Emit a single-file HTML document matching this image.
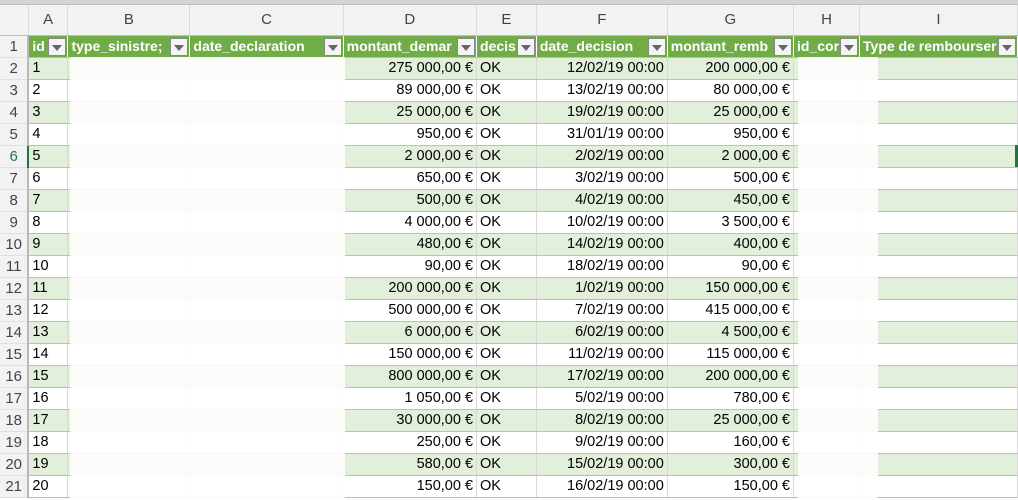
<!DOCTYPE html>
<html><head><meta charset="utf-8"><style>
*{margin:0;padding:0;box-sizing:border-box}
body{width:1018px;height:500px;overflow:hidden;background:#fff;font-family:"Liberation Sans",sans-serif;font-size:14.5px;position:relative}
.top{position:absolute;left:0;top:0;width:1018px;height:5px;background:#d4d4d4;border-bottom:1px solid #bdbdbd}
table{position:absolute;left:0;top:5px;border-collapse:collapse;table-layout:fixed}
td{height:22px;white-space:nowrap;overflow:hidden;padding:0 3px;border-right:1px solid #d9d9d9;border-bottom:1px solid #a9d08e;color:#000;line-height:21px}
tr.ch td{height:30px;background:#f2f2f2;color:#444;text-align:center;border-right:1px solid #dcdcdc;border-bottom:1px solid #bfbfbf;font-size:15px}
td.rh{background:#f2f2f2;color:#444;text-align:center;border-right:2px solid #b8b8b8;border-bottom:1px solid #e0e0e0;padding:0;font-size:15px}
tr.h td.c{background:#70ad47;color:#fff;font-weight:bold;position:relative;border-right:1px solid #fff;padding-right:20px;font-size:14px}
.dd{position:absolute;right:1px;top:2px;width:18px;height:18px;background:#f4f4f4;border:1px solid #888}
.dd:after{content:"";position:absolute;left:3px;top:6px;border-left:5px solid transparent;border-right:5px solid transparent;border-top:6px solid #666}
tr.g td.c{background:#e2efda}
td.r{text-align:right}
.ov{position:absolute;background:rgba(255,255,255,0.88)}
</style></head><body>
<div class="top"></div>
<table>
<colgroup><col style="width:30px"><col style="width:40px"><col style="width:123px"><col style="width:156px"><col style="width:134px"><col style="width:54px"><col style="width:133px"><col style="width:127px"><col style="width:63px"><col style="width:158px"></colgroup>
<tr class="ch"><td style="background:#f2f2f2"></td><td>A</td><td>B</td><td>C</td><td>D</td><td>E</td><td>F</td><td>G</td><td>H</td><td>I</td></tr>
<tr class="h"><td class="rh">1</td><td class="c">id<span class="dd"></span></td><td class="c">type_sinistre;<span class="dd"></span></td><td class="c">date_declaration<span class="dd"></span></td><td class="c">montant_demar<span class="dd"></span></td><td class="c">decis<span class="dd"></span></td><td class="c">date_decision<span class="dd"></span></td><td class="c">montant_remb<span class="dd"></span></td><td class="c">id_cor<span class="dd"></span></td><td class="c">Type de rembourser<span class="dd"></span></td></tr>
<tr class="g"><td class="rh">2</td><td class="c">1</td><td class="c"></td><td class="c"></td><td class="c r">275 000,00 €</td><td class="c">OK</td><td class="c r">12/02/19 00:00</td><td class="c r">200 000,00 €</td><td class="c"></td><td class="c"></td></tr>
<tr><td class="rh">3</td><td class="c">2</td><td class="c"></td><td class="c"></td><td class="c r">89 000,00 €</td><td class="c">OK</td><td class="c r">13/02/19 00:00</td><td class="c r">80 000,00 €</td><td class="c"></td><td class="c"></td></tr>
<tr class="g"><td class="rh">4</td><td class="c">3</td><td class="c"></td><td class="c"></td><td class="c r">25 000,00 €</td><td class="c">OK</td><td class="c r">19/02/19 00:00</td><td class="c r">25 000,00 €</td><td class="c"></td><td class="c"></td></tr>
<tr><td class="rh">5</td><td class="c">4</td><td class="c"></td><td class="c"></td><td class="c r">950,00 €</td><td class="c">OK</td><td class="c r">31/01/19 00:00</td><td class="c r">950,00 €</td><td class="c"></td><td class="c"></td></tr>
<tr class="g"><td class="rh" style="color:#217346;border-right-color:#217346">6</td><td class="c">5</td><td class="c"></td><td class="c"></td><td class="c r">2 000,00 €</td><td class="c">OK</td><td class="c r">2/02/19 00:00</td><td class="c r">2 000,00 €</td><td class="c"></td><td class="c"></td></tr>
<tr><td class="rh">7</td><td class="c">6</td><td class="c"></td><td class="c"></td><td class="c r">650,00 €</td><td class="c">OK</td><td class="c r">3/02/19 00:00</td><td class="c r">500,00 €</td><td class="c"></td><td class="c"></td></tr>
<tr class="g"><td class="rh">8</td><td class="c">7</td><td class="c"></td><td class="c"></td><td class="c r">500,00 €</td><td class="c">OK</td><td class="c r">4/02/19 00:00</td><td class="c r">450,00 €</td><td class="c"></td><td class="c"></td></tr>
<tr><td class="rh">9</td><td class="c">8</td><td class="c"></td><td class="c"></td><td class="c r">4 000,00 €</td><td class="c">OK</td><td class="c r">10/02/19 00:00</td><td class="c r">3 500,00 €</td><td class="c"></td><td class="c"></td></tr>
<tr class="g"><td class="rh">10</td><td class="c">9</td><td class="c"></td><td class="c"></td><td class="c r">480,00 €</td><td class="c">OK</td><td class="c r">14/02/19 00:00</td><td class="c r">400,00 €</td><td class="c"></td><td class="c"></td></tr>
<tr><td class="rh">11</td><td class="c">10</td><td class="c"></td><td class="c"></td><td class="c r">90,00 €</td><td class="c">OK</td><td class="c r">18/02/19 00:00</td><td class="c r">90,00 €</td><td class="c"></td><td class="c"></td></tr>
<tr class="g"><td class="rh">12</td><td class="c">11</td><td class="c"></td><td class="c"></td><td class="c r">200 000,00 €</td><td class="c">OK</td><td class="c r">1/02/19 00:00</td><td class="c r">150 000,00 €</td><td class="c"></td><td class="c"></td></tr>
<tr><td class="rh">13</td><td class="c">12</td><td class="c"></td><td class="c"></td><td class="c r">500 000,00 €</td><td class="c">OK</td><td class="c r">7/02/19 00:00</td><td class="c r">415 000,00 €</td><td class="c"></td><td class="c"></td></tr>
<tr class="g"><td class="rh">14</td><td class="c">13</td><td class="c"></td><td class="c"></td><td class="c r">6 000,00 €</td><td class="c">OK</td><td class="c r">6/02/19 00:00</td><td class="c r">4 500,00 €</td><td class="c"></td><td class="c"></td></tr>
<tr><td class="rh">15</td><td class="c">14</td><td class="c"></td><td class="c"></td><td class="c r">150 000,00 €</td><td class="c">OK</td><td class="c r">11/02/19 00:00</td><td class="c r">115 000,00 €</td><td class="c"></td><td class="c"></td></tr>
<tr class="g"><td class="rh">16</td><td class="c">15</td><td class="c"></td><td class="c"></td><td class="c r">800 000,00 €</td><td class="c">OK</td><td class="c r">17/02/19 00:00</td><td class="c r">200 000,00 €</td><td class="c"></td><td class="c"></td></tr>
<tr><td class="rh">17</td><td class="c">16</td><td class="c"></td><td class="c"></td><td class="c r">1 050,00 €</td><td class="c">OK</td><td class="c r">5/02/19 00:00</td><td class="c r">780,00 €</td><td class="c"></td><td class="c"></td></tr>
<tr class="g"><td class="rh">18</td><td class="c">17</td><td class="c"></td><td class="c"></td><td class="c r">30 000,00 €</td><td class="c">OK</td><td class="c r">8/02/19 00:00</td><td class="c r">25 000,00 €</td><td class="c"></td><td class="c"></td></tr>
<tr><td class="rh">19</td><td class="c">18</td><td class="c"></td><td class="c"></td><td class="c r">250,00 €</td><td class="c">OK</td><td class="c r">9/02/19 00:00</td><td class="c r">160,00 €</td><td class="c"></td><td class="c"></td></tr>
<tr class="g"><td class="rh">20</td><td class="c">19</td><td class="c"></td><td class="c"></td><td class="c r">580,00 €</td><td class="c">OK</td><td class="c r">15/02/19 00:00</td><td class="c r">300,00 €</td><td class="c"></td><td class="c"></td></tr>
<tr><td class="rh">21</td><td class="c">20</td><td class="c"></td><td class="c"></td><td class="c r">150,00 €</td><td class="c">OK</td><td class="c r">16/02/19 00:00</td><td class="c r">150,00 €</td><td class="c"></td><td class="c"></td></tr>
</table>
<div class="ov" style="left:70px;top:57px;width:275px;height:443px"></div>
<div class="ov" style="left:798px;top:57px;width:80px;height:443px"></div>
<div style="position:absolute;left:1015px;top:145px;width:3px;height:22px;background:#217346"></div>
</body></html>
